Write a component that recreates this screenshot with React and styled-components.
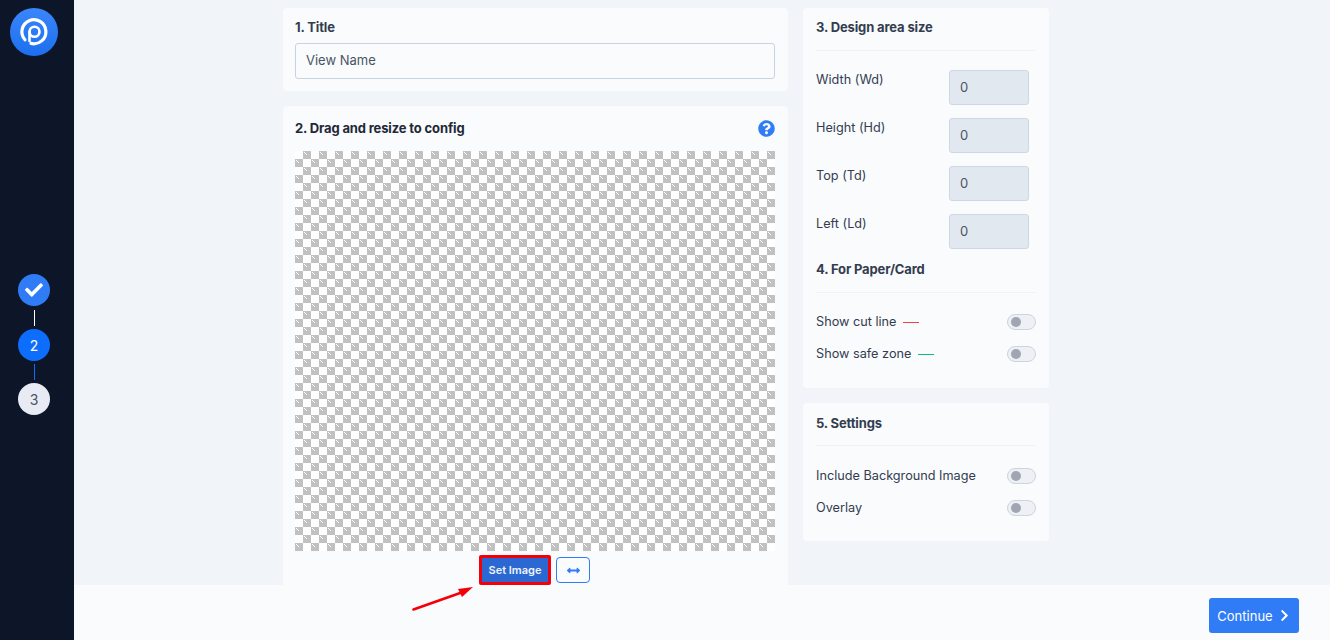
import React from "react";
import styled, { createGlobalStyle } from "styled-components";
import { FaCheck, FaQuestionCircle, FaArrowsAltH, FaChevronRight } from "react-icons/fa";

const Global = createGlobalStyle`
  html, body { margin: 0; padding: 0; height: 100%; overflow: hidden; }
  * { box-sizing: border-box; }
  body { font-family: Inter, "Liberation Sans", sans-serif; background: #f1f4f9; }
`;

const Page = styled.div`
  position: relative;
  display: flex;
  width: 100%;
  height: 640px;
  overflow: hidden;
`;
const Sidebar = styled.aside`
  position: relative;
  flex: 0 0 74px;
  background: #0d1628;
  display: flex;
  flex-direction: column;
  align-items: center;
  padding: 8px 6px 0 0;
`;
const Logo = styled.div`
  width: 48px;
  height: 48px;
  border-radius: 50%;
  background: linear-gradient(180deg, #3a86fb, #1c6ff0);
  display: flex;
  align-items: center;
  justify-content: center;
`;
const Steps = styled.div`
  display: flex;
  flex-direction: column;
  align-items: center;
  margin-top: 218px;
`;
const Step = styled.div`
  width: 32px;
  height: 32px;
  border-radius: 50%;
  display: flex;
  align-items: center;
  justify-content: center;
  font-size: 14px;
  background: ${(p) => p.$bg};
  color: ${(p) => p.$fg};
  svg { font-size: 18px; }
`;
const Connector = styled.div`
  width: 1px;
  height: 16px;
  margin: ${(p) => p.$mt}px 0 3px;
  background: ${(p) => p.$color};
`;
const Main = styled.main`
  flex: 1;
  display: flex;
  flex-direction: column;
  min-width: 0;
`;
const Content = styled.div`
  flex: 1;
  min-height: 0;
  overflow: hidden;
  padding: 8px 0 0 209px;
  display: flex;
  gap: 15px;
  align-items: flex-start;
`;
const LeftCol = styled.div`
  width: 505px;
  display: flex;
  flex-direction: column;
  gap: 15px;
`;
const RightCol = styled.div`
  width: 246px;
  display: flex;
  flex-direction: column;
  gap: 15px;
`;
const Card = styled.section`
  background: #f9fbfd;
  border-radius: 4px;
  padding: 9px 13px ${(p) => p.$pb ?? 12}px 12px;
`;
const SideCard = styled(Card)`
  padding: ${(p) => p.$pt}px 13px ${(p) => p.$pb}px 13px;
`;
const Title = styled.h3`
  margin: 0;
  font-size: 13px;
  line-height: 20px;
  font-weight: 700;
  letter-spacing: -0.14px;
  color: ${(p) => p.$color || "#343d4f"};
`;
const TitleRow = styled.div`
  display: flex;
  justify-content: space-between;
  align-items: center;
  height: 26px;
  margin-bottom: 10px;
  color: #2f7cf6;
  font-size: 17px;
  svg { display: block; }
`;
const TextInput = styled.input`
  display: block;
  width: 100%;
  height: 36px;
  margin-top: 6px;
  padding: 0 10px 2px;
  border: 1px solid #c6d3e3;
  border-radius: 3px;
  background: #f9fbfd;
  color: #4b5563;
  font: 400 13px Inter, sans-serif;
`;
const Canvas = styled.svg`
  display: block;
  width: 480px;
  height: 400px;
`;
const Actions = styled.div`
  display: flex;
  justify-content: center;
  align-items: center;
  gap: 5px;
  margin-top: 4px;
  padding-right: 1px;
  height: 30px;
`;
const SetImage = styled.button`
  width: 72px;
  height: 30px;
  border: 3px solid #f40009;
  border-radius: 2px;
  background: #2b68d1;
  color: #eef3fc;
  font: 600 11px Inter, sans-serif;
  padding: 0;
`;
const FlipButton = styled.button`
  width: 34px;
  height: 26px;
  border: 1px solid #2f7cf6;
  border-radius: 4px;
  background: #f9fbfd;
  color: #2f7cf6;
  padding: 0;
  display: flex;
  align-items: center;
  justify-content: center;
  font-size: 13px;
`;
const Divider = styled.hr`
  margin: ${(p) => p.$mt ?? 13}px 0 0;
  border: 0;
  border-top: 1px solid #f0f2f6;
`;
const Fields = styled.div`
  display: flex;
  flex-direction: column;
  gap: 13px;
  margin-top: 19px;
`;
const FieldRow = styled.label`
  display: flex;
  justify-content: space-between;
  padding-right: 7px;
  font-size: 12.7px;
  line-height: 18px;
  color: #343d4f;
  span { padding-top: 1px; }
`;
const NumberInput = styled.input`
  width: 80px;
  height: 35px;
  padding: 0 10px 2px;
  border: 1px solid #ced8e4;
  border-radius: 3px;
  background: #e2e8f0;
  color: #4b5563;
  font: 400 13px Inter, sans-serif;
`;
const SubTitle = styled(Title)`
  margin-top: 10px;
`;
const Toggles = styled.div`
  display: flex;
  flex-direction: column;
  gap: 12px;
  margin-top: ${(p) => p.$mt}px;
`;
const ToggleRow = styled.div`
  display: flex;
  align-items: center;
  justify-content: space-between;
  height: 20px;
  font-size: 12.7px;
  color: #343d4f;
`;
const ToggleLabel = styled.span`
  display: flex;
  align-items: center;
  gap: 7px;
  margin-top: -1px;
`;
const Dash = styled.i`
  display: block;
  width: 16px;
  height: 1px;
  margin-top: 1px;
  background: ${(p) => p.$color};
`;
const Toggle = styled.span`
  display: flex;
  align-items: center;
  width: 29px;
  height: 16px;
  padding-left: 3px;
  border: 1px solid #ced4da;
  border-radius: 8px;
  background: #edf0f4;
  &::before {
    content: "";
    width: 10px;
    height: 10px;
    border-radius: 50%;
    background: #a0a5b1;
  }
`;
const Footer = styled.footer`
  position: relative;
  flex: 0 0 55px;
  display: flex;
  align-items: flex-start;
  justify-content: flex-end;
  padding: 13px 31px 0 0;
  background: #f9fbfd;
`;
const Continue = styled.button`
  display: flex;
  align-items: center;
  justify-content: center;
  gap: 5px;
  width: 90px;
  height: 35px;
  border: 0;
  border-radius: 3px;
  background: #2f7cf6;
  color: #fff;
  font: 400 13px Inter, sans-serif;
  padding: 0;
  svg { font-size: 13px; }
`;
const Arrow = styled.svg`
  position: absolute;
  left: 405px;
  top: 580px;
  width: 80px;
  height: 40px;
  pointer-events: none;
`;

function Checker() {
  return (
    <Canvas viewBox="0 0 480 400" shapeRendering="crispEdges">
      <defs>
        <pattern id="chk" width="16" height="16" patternUnits="userSpaceOnUse">
          <rect width="16" height="16" fill="#fff" />
          <rect x="8" y="0" width="8" height="8" fill="#c1c1c1" />
          <rect x="0" y="8" width="8" height="8" fill="#c1c1c1" />
          <path d="M9 1h1v1h-1zM10 2h1v1h-1zM11 3h1v1h-1zM1 9h1v1H1zM2 10h1v1H2zM3 11h1v1H3z" fill="#fff" />
        </pattern>
      </defs>
      <rect width="480" height="400" fill="url(#chk)" />
    </Canvas>
  );
}

const Field = ({ label }) => (
  <FieldRow>
    <span>{label}</span>
    <NumberInput defaultValue="0" />
  </FieldRow>
);

const Switch = ({ label, dash }) => (
  <ToggleRow>
    <ToggleLabel>
      {label}
      {dash && <Dash $color={dash} />}
    </ToggleLabel>
    <Toggle />
  </ToggleRow>
);

export default function App() {
  return (
    <Page>
      <Global />
      <Sidebar>
        <Logo>
          <svg width="48" height="48" viewBox="0 0 48 48" fill="none" stroke="#fff">
            <path d="M21 35.4A12 12 0 1 0 15 31.8" strokeWidth="3.2" strokeLinecap="round" />
            <circle cx="24.5" cy="23.7" r="5" strokeWidth="2.6" />
            <path d="M19.5 24v9" strokeWidth="2.6" strokeLinecap="round" />
          </svg>
        </Logo>
        <Steps>
          <Step $bg="#2f7cf6" $fg="#fff"><FaCheck /></Step>
          <Connector $color="#fff" $mt="4" />
          <Step $bg="#0d6efd" $fg="#fff">2</Step>
          <Connector $color="#0d6efd" $mt="3" />
          <Step $bg="#e8ebf3" $fg="#4a5568">3</Step>
        </Steps>
      </Sidebar>
      <Main>
        <Content>
          <LeftCol>
            <Card>
              <Title>1. Title</Title>
              <TextInput defaultValue="View Name" />
            </Card>
            <Card>
              <TitleRow>
                <Title $color="#1f2937">2. Drag and resize to config</Title>
                <FaQuestionCircle />
              </TitleRow>
              <Checker />
              <Actions>
                <SetImage>Set Image</SetImage>
                <FlipButton><FaArrowsAltH /></FlipButton>
              </Actions>
            </Card>
          </LeftCol>
          <RightCol>
            <SideCard $pt={9} $pb={24}>
              <Title>3. Design area size</Title>
              <Divider />
              <Fields>
                <Field label="Width (Wd)" />
                <Field label="Height (Hd)" />
                <Field label="Top (Td)" />
                <Field label="Left (Ld)" />
              </Fields>
              <SubTitle>4. For Paper/Card</SubTitle>
              <Divider />
              <Toggles $mt={19}>
                <Switch label="Show cut line" dash="#ef4444" />
                <Switch label="Show safe zone" dash="#10b981" />
              </Toggles>
            </SideCard>
            <SideCard $pt={10} $pb={23}>
              <Title>5. Settings</Title>
              <Divider $mt={12} />
              <Toggles $mt={20}>
                <Switch label="Include Background Image" />
                <Switch label="Overlay" />
              </Toggles>
            </SideCard>
          </RightCol>
        </Content>
        <Footer>
          <Continue>Continue <FaChevronRight /></Continue>
        </Footer>
      </Main>
      <Arrow viewBox="0 0 80 40">
        <path d="M8.5 29.5L58 12" stroke="#f40009" strokeWidth="2.6" strokeLinecap="round" />
        <path d="M68 7L53 9L57 17Z" fill="#f40009" />
      </Arrow>
    </Page>
  );
}
